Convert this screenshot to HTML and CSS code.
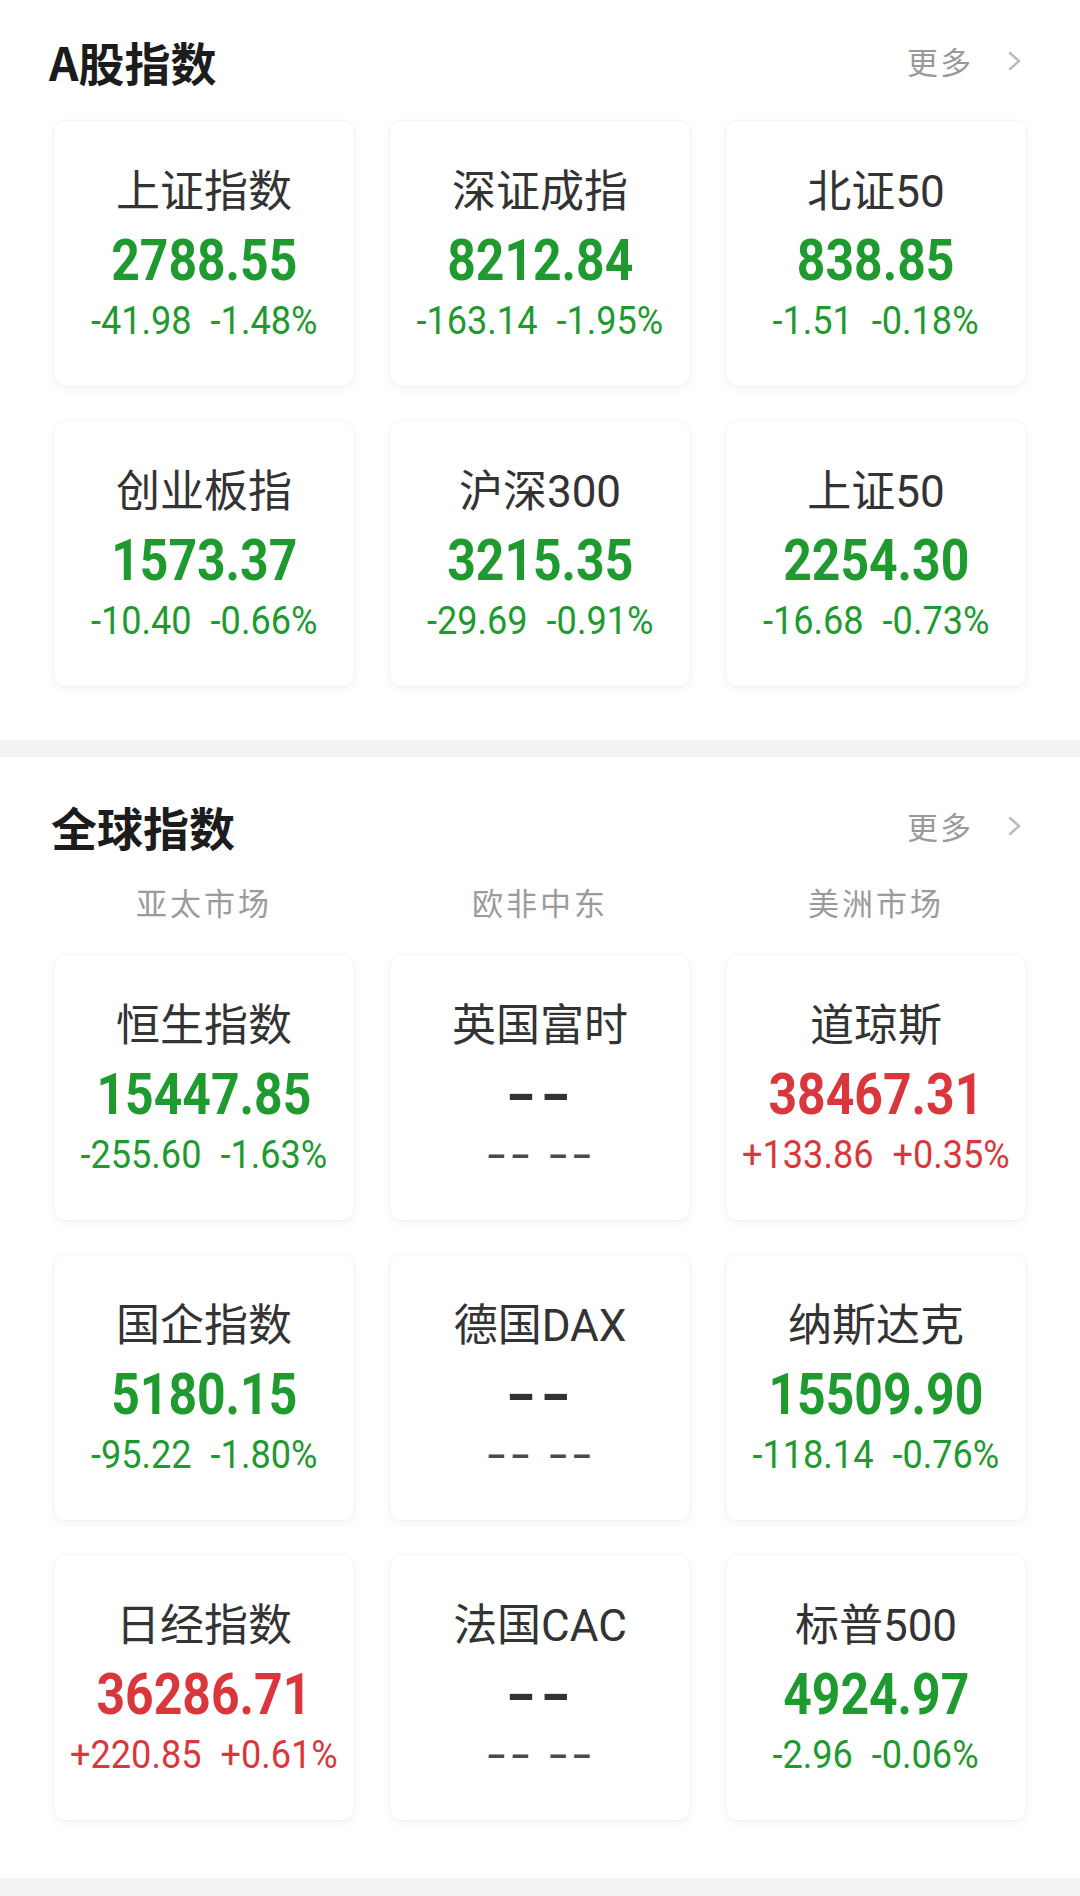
FILE: index.html
```html
<!DOCTYPE html>
<html lang="zh-CN">
<head>
<meta charset="utf-8">
<title>指数</title>
<link rel="stylesheet" href="styles.css">
</head>
<body>
<section class="section first">
  <div class="head">
    <h2 class="title">A股指数</h2>
    <div class="more">更多<svg class="chev" width="16" height="20" viewBox="0 0 16 20"><polyline points="3,2 12,10 3,18" fill="none" stroke="#bbb" stroke-width="2.4" stroke-linecap="round" stroke-linejoin="round"/></svg></div>
  </div>
  <div class="grid">
    <div class="card"><div class="name">上证指数</div><div class="value down">2788.55</div><div class="change down"><span>-41.98</span><span>-1.48%</span></div></div>
    <div class="card"><div class="name">深证成指</div><div class="value down">8212.84</div><div class="change down"><span>-163.14</span><span>-1.95%</span></div></div>
    <div class="card"><div class="name">北证50</div><div class="value down">838.85</div><div class="change down"><span>-1.51</span><span>-0.18%</span></div></div>
    <div class="card"><div class="name">创业板指</div><div class="value down">1573.37</div><div class="change down"><span>-10.40</span><span>-0.66%</span></div></div>
    <div class="card"><div class="name">沪深300</div><div class="value down">3215.35</div><div class="change down"><span>-29.69</span><span>-0.91%</span></div></div>
    <div class="card"><div class="name">上证50</div><div class="value down">2254.30</div><div class="change down"><span>-16.68</span><span>-0.73%</span></div></div>
  </div>
</section>
<div class="divider"></div>
<section class="section second">
  <div class="head">
    <h2 class="title">全球指数</h2>
    <div class="more">更多<svg class="chev" width="16" height="20" viewBox="0 0 16 20"><polyline points="3,2 12,10 3,18" fill="none" stroke="#bbb" stroke-width="2.4" stroke-linecap="round" stroke-linejoin="round"/></svg></div>
  </div>
  <div class="tabs">
    <div class="tab">亚太市场</div>
    <div class="tab">欧非中东</div>
    <div class="tab">美洲市场</div>
  </div>
  <div class="grid">
    <div class="card"><div class="name">恒生指数</div><div class="value down">15447.85</div><div class="change down"><span>-255.60</span><span>-1.63%</span></div></div>
    <div class="card"><div class="name">英国富时</div><div class="value empty">--</div><div class="change empty"><span>--</span><span>--</span></div></div>
    <div class="card"><div class="name">道琼斯</div><div class="value up">38467.31</div><div class="change up"><span>+133.86</span><span>+0.35%</span></div></div>
    <div class="card"><div class="name">国企指数</div><div class="value down">5180.15</div><div class="change down"><span>-95.22</span><span>-1.80%</span></div></div>
    <div class="card"><div class="name">德国DAX</div><div class="value empty">--</div><div class="change empty"><span>--</span><span>--</span></div></div>
    <div class="card"><div class="name">纳斯达克</div><div class="value down">15509.90</div><div class="change down"><span>-118.14</span><span>-0.76%</span></div></div>
    <div class="card"><div class="name">日经指数</div><div class="value up">36286.71</div><div class="change up"><span>+220.85</span><span>+0.61%</span></div></div>
    <div class="card"><div class="name">法国CAC</div><div class="value empty">--</div><div class="change empty"><span>--</span><span>--</span></div></div>
    <div class="card"><div class="name">标普500</div><div class="value down">4924.97</div><div class="change down"><span>-2.96</span><span>-0.06%</span></div></div>
  </div>
</section>
<div class="divider bottom"></div>
</body>
</html>
```
FILE: styles.css
```css
* { box-sizing: border-box; margin: 0; padding: 0; }
html, body { background: #fff; }
body {
  width: 1080px;
  font-family: Roboto, "Noto Sans CJK SC", sans-serif;
  color: #333;
}
.section { padding: 0 54px 54px; }
.section.second { padding-top: 8px; padding-bottom: 58px; }
.divider { height: 17px; background: #f3f3f5; }
.divider.bottom { height: 18px; }
.head {
  height: 121px;
  display: flex;
  align-items: center;
  justify-content: space-between;
}
.title {
  font-family: "Noto Sans CJK SC", sans-serif;
  font-size: 46px;
  font-weight: 700;
  color: #1c1c1c;
  margin-left: -5px;
}
.second .title { margin-left: -3px; }
.more {
  display: flex;
  align-items: center;
  gap: 34px;
  font-family: "Noto Sans CJK SC", sans-serif;
  font-size: 31px;
  color: #9a9a9a;
  padding-right: 3px;
  letter-spacing: 2px;
}
.chev { display: block; }
.tabs {
  display: grid;
  grid-template-columns: repeat(3, 300px);
  column-gap: 36px;
  height: 32px;
  margin-bottom: 37px;
}
.tab {
  text-align: center;
  font-family: "Noto Sans CJK SC", sans-serif;
  font-size: 31px;
  line-height: 32px;
  color: #9b9b9b;
  letter-spacing: 3px;
}
.grid {
  display: grid;
  grid-template-columns: repeat(3, 300px);
  column-gap: 36px;
  row-gap: 35px;
}
.card {
  height: 265px;
  background: #fff;
  border-radius: 12px;
  box-shadow: 0 3px 12px rgba(0, 0, 0, 0.05), 0 0 0 1px rgba(0, 0, 0, 0.025);
  display: flex;
  flex-direction: column;
  align-items: center;
  padding-top: 41px;
}
.name {
  font-size: 44px;
  line-height: 60px;
  color: #333;
}
.value {
  font-size: 58px;
  line-height: 76px;
  font-weight: 700;
  transform: scaleX(0.86);
}
.change {
  display: flex;
  gap: 20px;
  font-size: 38px;
  line-height: 46px;
  transform: scaleX(0.95);
}
.up { color: #da373d; }
.down { color: #1e9a2f; }
.value.empty {
  font-size: 56px;
  color: #333;
  letter-spacing: 2px;
  transform: translateY(1px) scaleX(1.45);
}
.change.empty {
  font-weight: 700;
  font-size: 32px;
  color: #4a4a4a;
  letter-spacing: 1px;
  gap: 8px;
  transform: scaleX(1.75);
}
```
